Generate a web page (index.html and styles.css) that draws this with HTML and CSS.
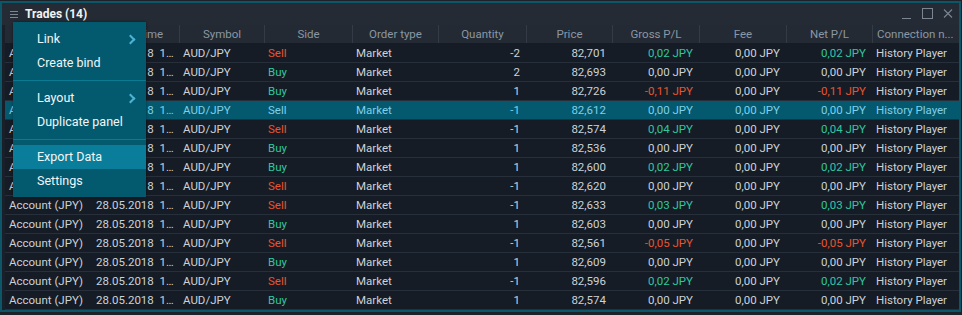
FILE: index.html
```html
<!DOCTYPE html>
<html>
<head>
<meta charset="utf-8">
<link rel="stylesheet" href="styles.css">
</head>
<body>
<div class="panel">
  <div class="titlebar">
    <svg class="burger" width="8" height="8" viewBox="0 0 8 8"><rect x="0" y="0" width="8" height="1" fill="#7b8692"/><rect x="0" y="3" width="8" height="1" fill="#7b8692"/><rect x="0" y="6" width="8" height="1" fill="#7b8692"/></svg>
    <span class="title">Trades (14)</span>
    <div class="controls">
      <svg width="10" height="12" viewBox="0 0 10 12"><rect x="0" y="10" width="9" height="1" fill="#7b8692"/></svg>
      <svg width="11" height="12" viewBox="0 0 11 12"><rect x="0.5" y="0.5" width="10" height="10" fill="none" stroke="#7b8692" stroke-width="1"/></svg>
      <svg width="10" height="12" viewBox="0 0 10 12"><path d="M1 1.5 L9 9.5 M9 1.5 L1 9.5" stroke="#7b8692" stroke-width="1.1"/></svg>
    </div>
  </div>
  <div class="grid">
    <div class="row head">
      <div class="c">Account</div><div class="c">Date/Time</div><div class="c">Symbol</div><div class="c">Side</div><div class="c">Order type</div><div class="c">Quantity</div><div class="c">Price</div><div class="c">Gross P/L</div><div class="c">Fee</div><div class="c">Net P/L</div><div class="c">Connection n...</div>
    </div>
    <div id="rows"></div>
  </div>
  <div class="menu">
    <div class="mi">Link<span class="chev"></span></div>
    <div class="mi">Create bind</div>
    <div class="sep"></div>
    <div class="mi">Layout<span class="chev"></span></div>
    <div class="mi">Duplicate panel</div>
    <div class="sep"></div>
    <div class="mi active">Export Data</div>
    <div class="mi">Settings</div>
  </div>
</div>
<script>
var data = [
 ["Sell","-2","82,701","0,02","0,02"],
 ["Buy","2","82,693","0,00","0,00"],
 ["Buy","1","82,726","-0,11","-0,11"],
 ["Sell","-1","82,612","0,00","0,00"],
 ["Sell","-1","82,574","0,04","0,04"],
 ["Buy","1","82,536","0,00","0,00"],
 ["Buy","1","82,600","0,02","0,02"],
 ["Sell","-1","82,620","0,00","0,00"],
 ["Sell","-1","82,633","0,03","0,03"],
 ["Buy","1","82,603","0,00","0,00"],
 ["Sell","-1","82,561","-0,05","-0,05"],
 ["Buy","1","82,609","0,00","0,00"],
 ["Sell","-1","82,596","0,02","0,02"],
 ["Buy","1","82,574","0,00","0,00"]
];
function pl(v){ return v.charAt(0)=="-" ? "neg" : (v=="0,00" ? "" : "pos"); }
var html = "";
data.forEach(function(d,i){
  var sel = i==3;
  html += '<div class="row'+(sel?' sel':'')+'">'+
   '<div class="c">Account (JPY)</div>'+
   '<div class="c">28.05.2018&nbsp; 1…</div>'+
   '<div class="c">AUD/JPY</div>'+
   '<div class="c '+(sel?'':(d[0]=="Sell"?'neg':'pos'))+'">'+d[0]+'</div>'+
   '<div class="c">Market</div>'+
   '<div class="c r">'+d[1]+'</div>'+
   '<div class="c r">'+d[2]+'</div>'+
   '<div class="c r '+(sel?'':pl(d[3]))+'">'+d[3]+' JPY</div>'+
   '<div class="c r">0,00 JPY</div>'+
   '<div class="c r '+(sel?'':pl(d[4]))+'">'+d[4]+' JPY</div>'+
   '<div class="c">History Player</div>'+
   '</div>';
});
document.getElementById("rows").innerHTML = html;
</script>
</body>
</html>
```
FILE: styles.css
```css
html, body {
  margin: 0;
  padding: 0;
}
body {
  background: #1d2228;
  width: 962px;
  height: 315px;
  overflow: hidden;
  font-family: Roboto, "Liberation Sans", sans-serif;
  font-size: 11.5px;
}
.panel {
  position: relative;
  box-sizing: border-box;
  margin-top: 1px;
  width: 961px;
  border: 2px solid #0c566a;
  background: #1a2029;
}
.titlebar {
  height: 22px;
  background: #252b34;
  display: flex;
  align-items: center;
  padding-left: 8px;
}
.burger {
  margin-right: 7px;
  margin-top: 1px;
}
.title {
  color: #f0f3f5;
  font-weight: bold;
  font-size: 12px;
}
.controls {
  margin-left: auto;
  display: flex;
  gap: 10px;
  align-items: center;
  padding-right: 6px;
}
.grid {
  padding-left: 3px;
}
.row {
  display: grid;
  grid-template-columns: 87px 87px 85px 88px 86px 88px 86px 87px 87px 86px 85px;
  height: 18px;
  border-bottom: 1px solid #27303a;
  background: #161c25;
  color: #cbd2d9;
  line-height: 19px;
}
.row.head {
  background: #242a33;
  color: #8a97a4;
  border-bottom: 1px solid #161c24;
}
.row.head .c {
  text-align: center;
  border-left: 1px solid #333b46;
  padding: 0 4px;
}
.row.head .c:first-child {
  border-left: none;
}
.c {
  padding: 0 6px 0 4px;
  white-space: nowrap;
  overflow: hidden;
}
.c.r {
  text-align: right;
}
.neg { color: #e8542e; }
.pos { color: #2fc7a0; }
.row.sel {
  background: #04596e;
  color: #7fcfe8;
}
.menu {
  position: absolute;
  left: 11px;
  top: 19px;
  width: 133px;
  background: #035a6f;
  padding: 5px 0 4px 0;
  box-shadow: 0 0 3px rgba(0,0,0,0.4);
}
.mi {
  position: relative;
  height: 24px;
  line-height: 24px;
  padding-left: 24px;
  color: #f2f6f8;
  font-size: 12.5px;
}
.mi.active {
  background: #097d99;
}
.sep {
  height: 11px;
  position: relative;
}
.sep::after {
  content: "";
  position: absolute;
  left: 0;
  right: 0;
  top: 5px;
  height: 1px;
  background: #0b7a93;
}
.chev {
  position: absolute;
  right: 12px;
  top: 9px;
  width: 5px;
  height: 5px;
  border-top: 2px solid #4db3d3;
  border-right: 2px solid #4db3d3;
  transform: rotate(45deg);
}
```
